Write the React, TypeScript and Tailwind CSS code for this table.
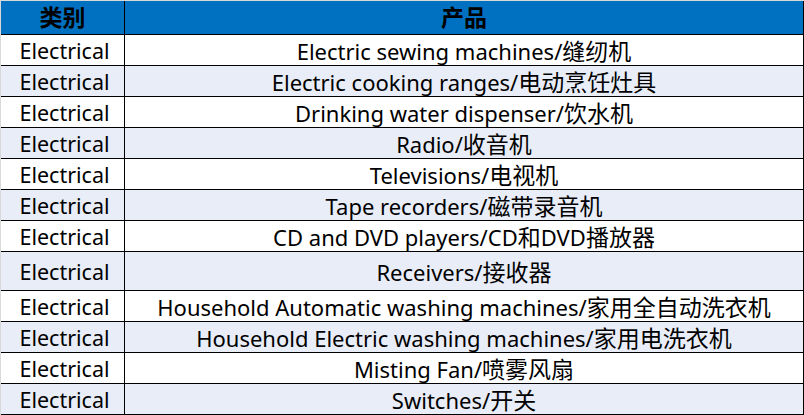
import React from "react"

const rows = [
  "Electric sewing machines/缝纫机",
  "Electric cooking ranges/电动烹饪灶具",
  "Drinking water dispenser/饮水机",
  "Radio/收音机",
  "Televisions/电视机",
  "Tape recorders/磁带录音机",
  "CD and DVD players/CD和DVD播放器",
  "Receivers/接收器",
  "Household Automatic washing machines/家用全自动洗衣机",
  "Household Electric washing machines/家用电洗衣机",
  "Misting Fan/喷雾风扇",
  "Switches/开关",
]

// CJK runs are set a touch larger than the latin text, like the source sheet
function Mixed({ text }: { text: string }) {
  const parts = text.split(/([\u4e00-\u9fff]+)/)
  return (
    <>
      {parts.map((p, i) =>
        /[\u4e00-\u9fff]/.test(p) ? (
          <span key={i} className="text-[23px]">{p}</span>
        ) : (
          <span key={i}>{p}</span>
        )
      )}
    </>
  )
}

export default function App() {
  return (
    <div
      className="w-[804px] h-[415px] bg-white border-l border-t border-[#d9d9d9] text-black"
      style={{ fontFamily: '"Noto Sans", "Noto Sans CJK SC", sans-serif' }}
    >
      {/* header */}
      <div className="grid grid-cols-[124px_679px] h-[34px] bg-[#0070c0] border-b border-black font-bold text-[23px]">
        <div className="flex items-center justify-center border-r border-black leading-none">类别</div>
        <div className="flex items-center justify-center border-r border-black leading-none">产品</div>
      </div>

      {rows.map((item, i) => (
        <div
          key={item}
          className={
            "grid grid-cols-[124px_679px] border-b border-black text-[21.5px] " +
            (i === 7 ? "h-[39px] " : "h-[31px] ") +
            (i % 2 === 1 ? "bg-[#e9edf7]" : "bg-white")
          }
        >
          <div className="flex items-center justify-center border-r border-black leading-none pt-[2px] pl-[4px]">Electrical</div>
          <div className="flex items-center justify-center border-r border-black leading-none pt-[2px] whitespace-nowrap text-[22px]">
            <span><Mixed text={item} /></span>
          </div>
        </div>
      ))}
    </div>
  )
}
